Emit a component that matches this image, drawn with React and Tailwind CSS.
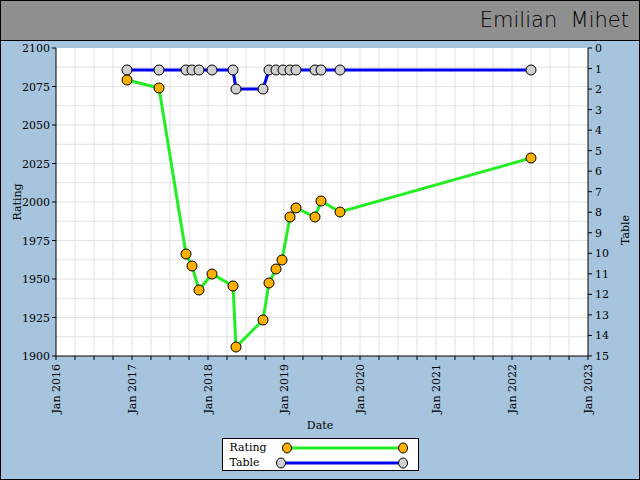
const X0 = 56, X1 = 588, Y0 = 48, Y1 = 356;
const rating = [[127,80],[159,88],[186,254],[192,266],[199,290],[212,274],[233,286],[236,347],[263,320],[269,283],[276,269],[282,260],[290,217],[296,208],[315,217],[321,201],[340,212],[531,158]];
const table = [[127,70],[159,70],[186,70],[192,70],[199,70],[212,70],[233,70],[236,89],[263,89],[269,70],[276,70],[283,70],[290,70],[296,70],[315,70],[321,70],[340,70],[531,70]];
const yearX = (i) => X0 + i * 76;
const pts = (a) => a.map((p) => p.join(",")).join(" ");

const Chart = () => {
  const vgrid = [];
  for (let i = 1; i < 28; i++) vgrid.push(X0 + i * 19);
  const hgrid = [];
  for (let i = 1; i < 16; i++) hgrid.push(Y0 + i * 19.25);
  return (
    <svg width="638" height="395" viewBox="1 41 638 395" className="block shrink-0" style={{ fontFamily: "'DejaVu Serif', serif" }}>
      <rect x={X0} y={Y0} width={X1 - X0} height={Y1 - Y0} fill="#fff" />
      {vgrid.map((x) => <line key={"v" + x} x1={x} x2={x} y1={Y0} y2={Y1} stroke="#e2e2e2" />)}
      {hgrid.map((y) => <line key={"h" + y} x1={X0} x2={X1} y1={y} y2={y} stroke="#e2e2e2" />)}
      <line x1={X0} x2={X0} y1={Y0} y2={Y1} stroke="#000" />
      <line x1={X1} x2={X1} y1={Y0} y2={Y1} stroke="#000" />
      <line x1={X0} x2={X1} y1={Y1} y2={Y1} stroke="#000" />
      {[2100,2075,2050,2025,2000,1975,1950,1925,1900].map((r, i) => {
        const y = Y0 + i * 38.5;
        return (
          <g key={r}>
            <line x1={X0 - 4} x2={X0} y1={y} y2={y} stroke="#000" />
            <text x={X0 - 6} y={y + 4} fontSize="11" textAnchor="end">{r}</text>
          </g>
        );
      })}
      {Array.from({ length: 16 }, (_, t) => {
        const y = Y0 + t * 20.53;
        return (
          <g key={t}>
            <line x1={X1} x2={X1 + 4} y1={y} y2={y} stroke="#000" />
            <text x={X1 + 7} y={y + 4} fontSize="11">{t}</text>
          </g>
        );
      })}
      {Array.from({ length: 29 }, (_, i) => (
        <line key={i} x1={X0 + i * 19} x2={X0 + i * 19} y1={Y1} y2={Y1 + 4} stroke="#000" />
      ))}
      {[2016,2017,2018,2019,2020,2021,2022,2023].map((yr, i) => (
        <text key={yr} fontSize="11" textAnchor="end" transform={`translate(${yearX(i) + 4},${Y1 + 8}) rotate(-90)`}>{"Jan " + yr}</text>
      ))}
      <text x="320" y="429" fontSize="11" textAnchor="middle">Date</text>
      <text fontSize="11" textAnchor="middle" transform="translate(21,202) rotate(-90)">Rating</text>
      <text fontSize="11" textAnchor="middle" transform="translate(629,230) rotate(-90)">Table</text>
      <polyline points={pts(table)} fill="none" stroke="#0000ee" strokeWidth="3" />
      <polyline points={pts(rating)} fill="none" stroke="#22ee22" strokeWidth="3" />
      {table.map(([x, y], i) => <ellipse key={"t" + i} cx={x} cy={y} rx="5" ry="5" fill="#d0d0d0" stroke="#000" />)}
      {rating.map(([x, y], i) => <ellipse key={"r" + i} cx={x} cy={y} rx="5" ry="5" fill="#ffb000" stroke="#000" />)}
    </svg>
  );
};

export default function App() {
  return (
    <div className="w-[640px] h-[480px] border border-black bg-[#a6c4de] overflow-hidden flex flex-col">
      <div className="h-[40px] shrink-0 bg-[#8f8f8f] border-b border-black flex items-center justify-end pr-[10px]">
        <span className="text-[21px] text-black" style={{ fontFamily: "'DejaVu Sans', sans-serif", fontWeight: 300 }}>Emilian&nbsp;&nbsp;Mihet</span>
      </div>
      <Chart />
      <div className="flex justify-center mt-[2px]">
        <div className="w-[197px] h-[33px] bg-white border border-black px-[7px] py-[1px] text-[11px] leading-[15px]" style={{ fontFamily: "'DejaVu Serif', serif" }}>
          <div className="flex items-center">
            <span className="w-[51px]">Rating</span>
            <svg width="130" height="14"><line x1="6" x2="122" y1="7" y2="7" stroke="#22ee22" strokeWidth="3" /><ellipse cx="6" cy="7" rx="4.5" ry="5" fill="#ffb000" stroke="#000" /><ellipse cx="122" cy="7" rx="4.5" ry="5" fill="#ffb000" stroke="#000" /></svg>
          </div>
          <div className="flex items-center">
            <span className="w-[45px]">Table</span>
            <svg width="136" height="14"><line x1="6" x2="128" y1="7" y2="7" stroke="#0000ee" strokeWidth="3" /><ellipse cx="6" cy="7" rx="4.5" ry="5" fill="#d0d0d0" stroke="#000" /><ellipse cx="128" cy="7" rx="4.5" ry="5" fill="#d0d0d0" stroke="#000" /></svg>
          </div>
        </div>
      </div>
    </div>
  );
}
